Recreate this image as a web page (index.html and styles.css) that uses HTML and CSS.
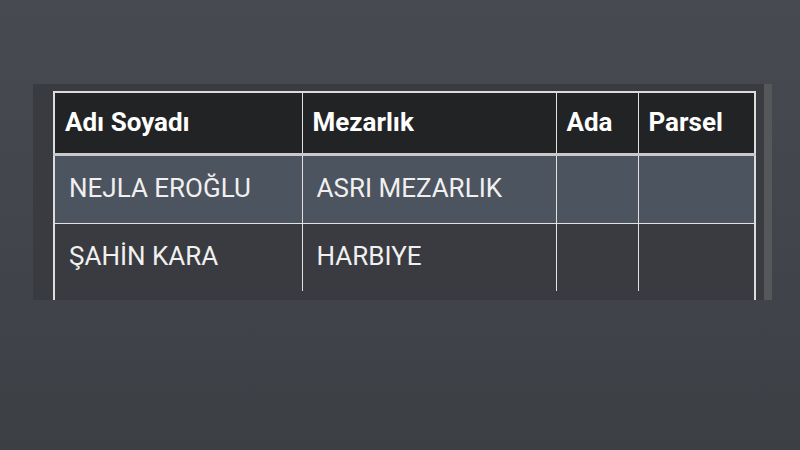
FILE: index.html
```html
<!DOCTYPE html>
<html lang="tr">
<head>
<meta charset="utf-8">
<title>Mezar Sorgulama</title>
<link rel="stylesheet" href="styles.css">
</head>
<body>
  <div class="panel">
    <div class="scroll-area">
      <table class="grid">
        <colgroup>
          <col class="c-name"><col class="c-cem"><col class="c-ada"><col class="c-parsel">
        </colgroup>
        <thead>
          <tr>
            <th>Adı Soyadı</th>
            <th>Mezarlık</th>
            <th>Ada</th>
            <th>Parsel</th>
          </tr>
        </thead>
        <tbody>
          <tr class="sel">
            <td>NEJLA EROĞLU</td>
            <td>ASRI MEZARLIK</td>
            <td></td>
            <td></td>
          </tr>
          <tr>
            <td>ŞAHİN KARA</td>
            <td>HARBIYE</td>
            <td></td>
            <td></td>
          </tr>
          <tr class="foot">
            <td colspan="4"></td>
          </tr>
        </tbody>
      </table>
    </div>
    <div class="scrollbar"></div>
  </div>
</body>
</html>
```
FILE: styles.css
```css
html, body {
  margin: 0;
  padding: 0;
}
body {
  width: 800px;
  height: 450px;
  overflow: hidden;
  background: linear-gradient(180deg, #474a51 0%, #42454b 50%, #3c3f44 100%);
  font-family: Roboto, "Noto Sans", "Liberation Sans", sans-serif;
  color: #ffffff;
}
.panel {
  margin: 84px 0 0 33px;
  width: 739px;
  height: 216px;
  display: flex;
  background: #393b40;
  overflow: hidden;
}
.scroll-area {
  flex: 1;
  padding: 7px 0 0 20px;
  overflow: hidden;
}
.scrollbar {
  width: 8px;
  background: #55575b;
}
.grid {
  width: 701px;
  border-collapse: collapse;
  table-layout: fixed;
  border: 2px solid #dcdcdc;
}
.c-name { width: 248px; }
.c-cem { width: 254px; }
.c-ada { width: 82px; }
.c-parsel { width: 117px; }
.grid th, .grid td {
  border: 1px solid #e2e2e2;
  text-align: left;
  vertical-align: middle;
  white-space: nowrap;
  overflow: hidden;
}
.grid th {
  height: 58px;
  padding: 0 0 2px 10px;
  background: #222324;
  font-weight: 700;
  font-size: 26px;
  border-bottom: 3px solid #c9c9c9;
}
.grid td {
  height: 64px;
  padding: 0 0 3px 14px;
  font-size: 26px;
  font-weight: 400;
  color: #f0f0f0;
}
.grid tr.sel td {
  background: #4c5460;
}
.grid tr.foot td {
  height: 40px;
  border-top: hidden;
}
```
